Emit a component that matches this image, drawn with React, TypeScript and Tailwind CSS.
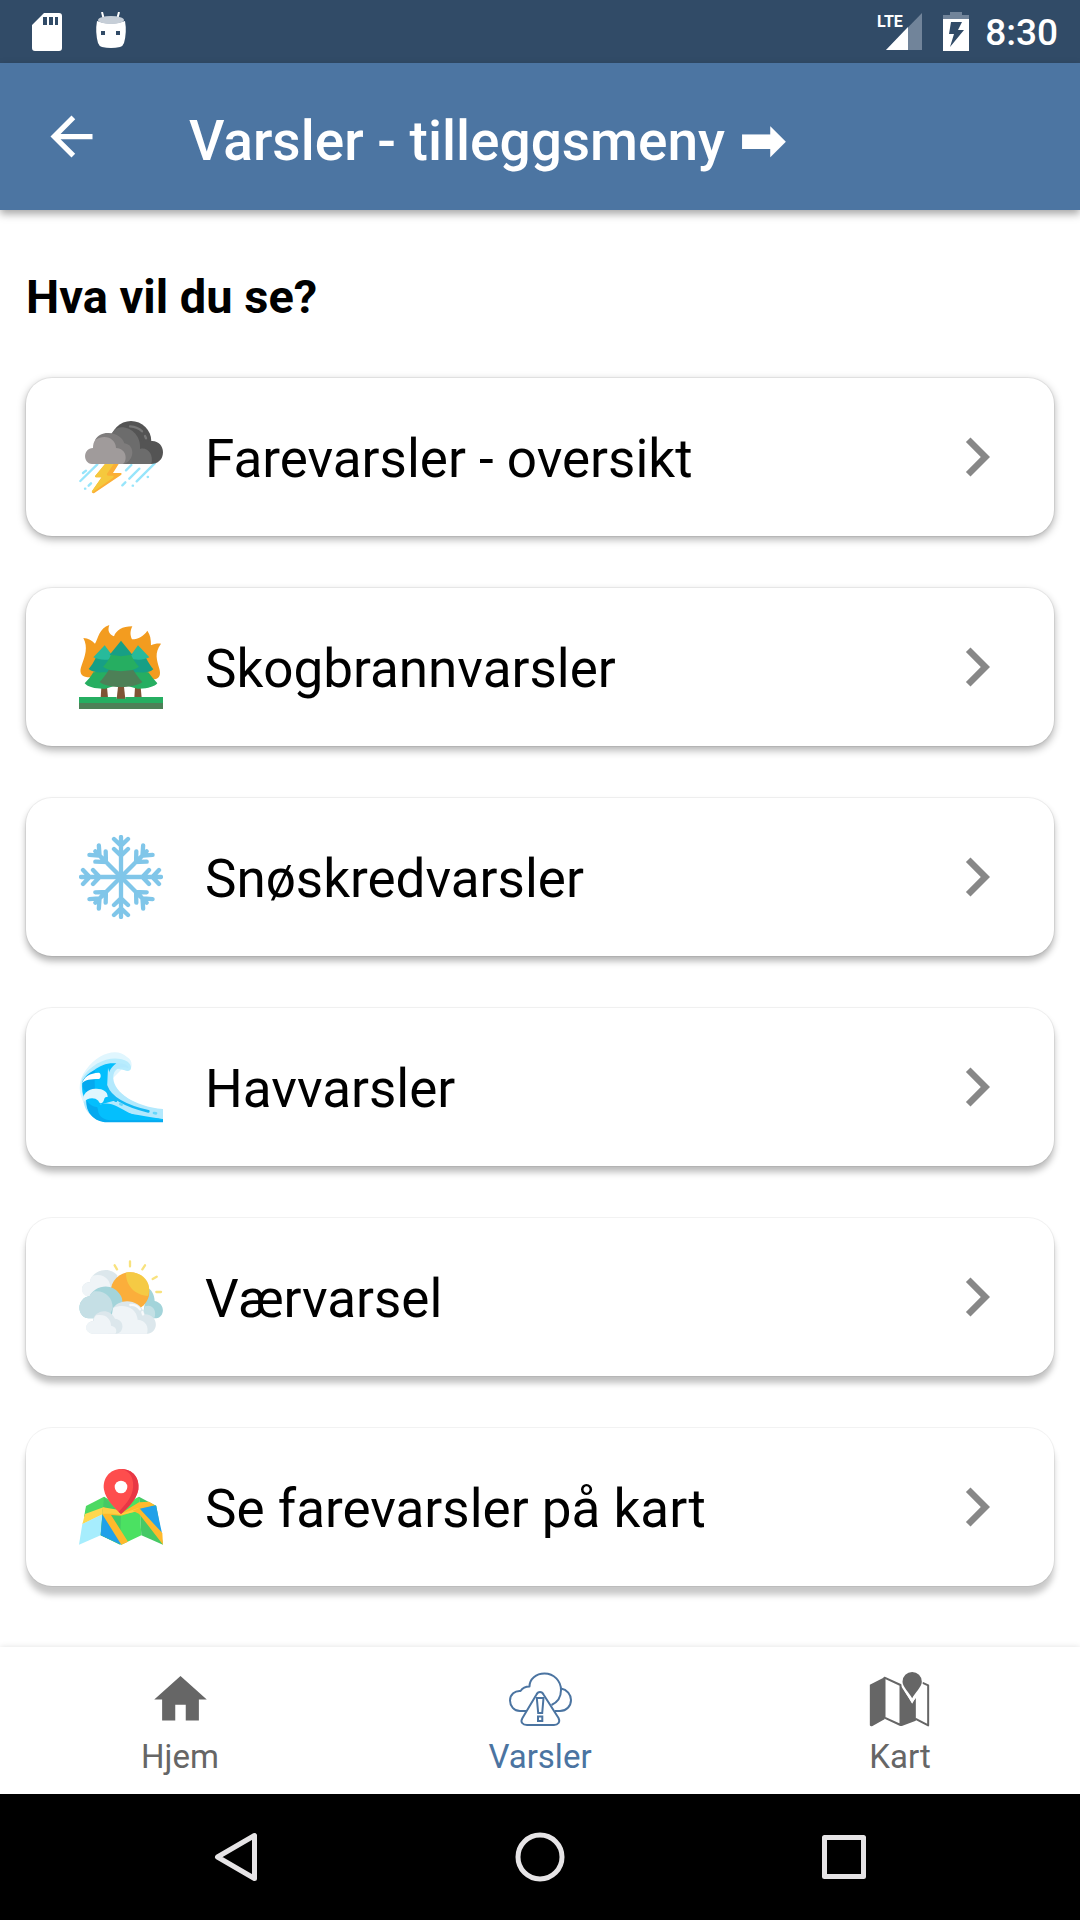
import type { ReactNode } from "react";

function StormIcon() {
  return (
    <svg viewBox="57 45 252 252" className="size-[84px] shrink-0" aria-hidden="true">
      <g stroke="#97e5fb" strokeWidth="7" strokeLinecap="round">
        <path d="M112 193 61 243M78 212l-9 7M93 250l-7 7M75 266h1M214 195l-16 16M238 206l-30 30M284 190l-54 54M196 247l-9 9M218 257h1M263 231h1" />
      </g>
      <circle cx="213" cy="124" r="61" fill="#545454" />
      <path d="M155 192v-70l120 1c20-1 34 15 34 34 0 22-16 35-36 35z" fill="#545454" />
      <path d="M155 192 154 101c8-12 18-19 30-19 34 0 60 31 56 65 22-7 42 16 34 45z" fill="#6c6c6c" />
      <path d="M190 192 105 121c8-16 25-23 41-22 24 1 42 14 47 31 33 4 32 52-2 62z" fill="#7e7c7c" />
      <path d="M96 192c-28-2-28-47 3-48 0-10 2-18 7-25 31-19 62-2 62 25 35 1 34 43 20 48z" fill="#a09b9b" />
      <path d="M210 79c15 1 28 6 36 15M255 108l3 7" stroke="#777" strokeWidth="7" strokeLinecap="round" fill="none" />
      <path d="M135 192h41l-17 27h24c3 2 2 4 0 6l-80 54c-5 2-9-2-7-5l29-42h-17c-3-1-4-3-2-5z" fill="#fbaf36" />
      <path d="M135 192h26l-20 29c-1 3 0 5 4 6h14c3 1 2 4 0 6l-60 43c-3 0-4-1-3-3l29-41h-17c-3-1-4-3-2-5z" fill="#f5c83d" />
    </svg>
  );
}

function ForestFireIcon() {
  return (
    <svg viewBox="57 45 252 252" className="size-[84px] shrink-0" aria-hidden="true">
      <path d="M82 202c-20-2-25-16-17-36 10-28 20-54 5-82 15 1 26 7 35 17 10-16 12-46 43-56-6 17-1 28 14 34 7-18 24-30 55-30-7 15-7 26-1 39 20 0 35-10 46-26 9 12 11 26 11 44 9-4 19-6 30-5-21 28-12 49-5 75 5 17 1 28-13 32z" fill="#f39c1f" />
      <path d="M124 232h17l3 31h-22zM225 232h17l3 31h-22z" fill="#7f5435" />
      <path d="m101 187 33-4 34 4 14 20 16-20 33-4 34 4c9 13 19 24 27 33-9 10-29 17-60 16l-50-14-46 14c-28 1-52-4-62-16 9-10 19-20 26-33z" fill="#26ae61" />
      <path d="m107 144 27-5 27 5 55 0 18-5 24 5c7 14 15 25 22 34-9 8-24 11-44 9H131c-20 2-36-3-45-10 8-9 15-20 21-33z" fill="#179f85" />
      <path d="m134 106 28 37c-16 9-43 8-62-1zM234 106l34 36c-17 9-45 9-61 1z" fill="#27ba9b" />
      <path d="M183 92l34 42c-14 10-54 10-68 0z" fill="#179f85" />
      <path d="m153 134 30 5 30-5c7 15 15 26 24 36-23 18-85 18-108 0 9-10 18-21 24-36z" fill="#26ae61" />
      <path d="m146 180 37 4 37-4c8 14 17 25 27 36-25 20-104 20-128 0 10-11 19-22 27-36z" fill="#4d8057" />
      <path d="M174 231h18l4 36h-26z" fill="#7f5435" />
      <path d="M57 261h113v5h26v-5h113v18H57z" fill="#26ae61" />
      <path d="M57 279h252v18H57z" fill="#4d8057" />
    </svg>
  );
}

function SnowIcon() {
  return (
    <svg viewBox="57 45 252 252" className="size-[84px] shrink-0" aria-hidden="true">
      <g stroke="#80c6e9" strokeWidth="13" strokeLinecap="round" fill="none">
        {[0, 45, 90, 135, 180, 225, 270, 315].map((angle) => (
          <path
            key={angle}
            transform={`rotate(${angle} 183 171)`}
            d={angle % 90 === 0 ? "M183 171V51M162 57l21 20 21-20M162 87l21 20 21-20" : "M183 171V80M163 57l20 23 20-23M161 84l22 23 22-23M183 90V62"}
          />
        ))}
      </g>
    </svg>
  );
}

function WaveIcon() {
  return (
    <svg viewBox="57 30 252 252" className="size-[84px] shrink-0" aria-hidden="true">
      <path d="M82 218c-30-36-30-82-4-114 36-50 94-67 123-38 20 9 16 40 3 42-7 1-12-3-15-9l-90 90z" fill="#e0f6fe" />
      <path d="M66 130c34-53 96-73 137-50 20 18 7 33-8 26l-44-9-62 94c-22-12-28-34-23-61z" fill="#b8ecfd" />
      <path d="M68 138c18-33 58-60 99-54 28 2 38 5 38 15-30-8-47 8-45 32 3 40 61 83 149 91v38H142c-43-4-72-31-72-71-5-15-5-33-2-51z" fill="#b3e9fd" />
      <path d="M68 138c6-12 18-24 34-32 18-16 43-24 67-21-18 13-25 28-24 48 4 44 40 78 96 100l68 20v8H142c-38-3-62-26-62-61-13-18-16-39-12-62z" fill="#04bffd" />
      <path d="M68 138c8-13 20-24 36-32-1 27 1 48 1 65l-20 2c-16-5-19-17-17-35zM79 196c-2 37 24 66 63 66h167v-10H165c-32-2-49-12-53-35-15-2-25-9-33-21z" fill="#05a9ef" />
      <path d="M119 209c22 14 78 26 190 43v-28c-65-4-112-30-145-67-9-11-13-23-13-37l-7-21-3 63 29 33z" fill="#b3e9fd" />
      <path d="M119 209c33-11 55 8 89 25 24 11 50 15 100 18v4H150c-29-4-44-24-31-47z" fill="#04bffd" />
      <path d="M139 154c13 36 67 61 126 75M139 176c9 10 18 16 29 21" stroke="#14b8f4" strokeWidth="8" strokeLinecap="round" fill="none" />
      <path d="m181 207 4 2M282 234l6 1" stroke="#65d7fb" strokeWidth="8" strokeLinecap="round" />
      <path d="M66 145c5-19 24-31 50-32 8 1 8 18 0 19-25 0-39 2-50 13z" fill="#fff" />
      <path d="M70 202c-6-25 16-42 37-41 20-1 37 8 36 25-5 0-9 0-11 8-3 12-12 15-17 3-12-12-33-9-45 5z" fill="#e0f6fe" />
    </svg>
  );
}

function WeatherIcon() {
  return (
    <svg viewBox="57 30 252 252" className="size-[84px] shrink-0" aria-hidden="true">
      <path d="M164 61l7 12M210 49v15M255 61l-8 12M290 95l-12 7M289 141h14" stroke="#f8e27e" strokeWidth="7" strokeLinecap="round" />
      <path d="M82 153c-23-9-21-40 8-42 2-28 51-54 82-20v50z" fill="#dce7ec" />
      <path d="M82 155c-24-9-21-42 8-43 0-9 3-15 8-20 36-9 56 14 54 45z" fill="#eff4f7" />
      <path d="M262 128c12 5 21 19 22 40 34 7 30 49 5 52h-42z" fill="#a3d4da" />
      <path d="M283 220c9-28-9-44-28-36l-10 36z" fill="#c3e0e5" />
      <circle cx="210" cy="140" r="58" fill="#fbae3b" />
      <path d="M198 83c47-8 81 30 66 70-39-3-67-31-66-70z" fill="#f5ca44" />
      <path d="M86 220c-36-2-39-60 3-67 13-29 68-46 94 0 3 6 4 11 4 17l-10 50z" fill="#a3d4da" />
      <path d="M86 220c-36-2-39-60 3-67 3-6 7-10 13-14 34-4 57 20 56 50l-12 31z" fill="#c5dfe5" />
      <path d="M163 266l-5-74c17-31 78-35 97 16 43 3 41 55 9 58z" fill="#dce7ec" />
      <path d="M143 266l17-78c34-14 70 0 73 36 25 2 34 21 28 42z" fill="#eff4f7" />
      <path d="M99 266c-26-2-27-34 0-38 0-28 47-46 66-7 31 3 28 44 3 45z" fill="#dce7ec" />
      <path d="M99 266c-28-2-28-35 2-38 0-7 3-13 8-17 27-6 44 10 44 31 15 2 20 16 13 24z" fill="#eff4f7" />
      <path d="M211 180c12-1 23 5 29 13M247 201l2 7" stroke="#f8fafb" strokeWidth="7" strokeLinecap="round" fill="none" />
    </svg>
  );
}

function MapPinIcon() {
  return (
    <svg viewBox="57 30 252 252" className="size-[84px] shrink-0" aria-hidden="true">
      <path d="m78 153 54-28v33l-60 28z" fill="#4dd963" />
      <path d="m75 177 57-21-6 23-59 29z" fill="#ffd74e" />
      <path d="m67 207 60-29-5 63-65 28z" fill="#a6edfd" />
      <path d="m132 125 50 28 55-28 7 116-60 28-62-28z" fill="#4be162" />
      <path d="m132 125 51 52-3 92-58-28z" fill="#45c965" />
      <path d="m127 178 57 73v18l-62-28z" fill="#20a1e9" />
      <path d="m129 157 54 18 54-33v24l-54 16-30-2 51 80-20 9-57-91z" fill="#ffb92c" />
      <path d="m129 157 44 7 10 12 54-18v10l-54 11-28-3h-28z" fill="#ffcf43" />
      <path d="m237 125 52 28 20 116-65-28z" fill="#45c965" />
      <path d="m237 159 51-8 18 84z" fill="#20a1e9" />
      <path d="m237 142 30-2 18 11-46 10 68 73 2 35-72-93z" fill="#ffb92c" />
      <path d="m218 167 19-8 7 8v13z" fill="#ffb92c" />
      <path d="M183 42c37 0 57 29 52 62-5 29-35 58-52 73-16-15-46-43-51-73-5-33 17-62 51-62z" fill="#fe4d4d" />
      <path d="M183 42c37 0 57 29 52 62-5 29-35 58-52 73l-7-7c17-17 37-39 42-64 7-34-9-61-35-64z" fill="#e83745" />
      <circle cx="183" cy="96" r="19" fill="#fff" />
    </svg>
  );
}

function HomeTabIcon() {
  return (
    <svg viewBox="0 0 24 24" className="size-[63px]" fill="currentColor" aria-hidden="true">
      <path d="M10 20v-6h4v6h5v-8h3L12 3 2 12h3v8z" />
    </svg>
  );
}

function AlertTabIcon() {
  return (
    <svg viewBox="0 0 63 63" className="size-[63px]" fill="none" stroke="currentColor" strokeWidth="2" strokeLinejoin="round" aria-hidden="true">
      <path d="M17 43h-6C5 43 1 38 1 32.500c0-6 5-10 10.500-9.500 2-3 5-4.500 9-4.500C20.500 11 27 5.500 35.500 5.500 45 5.500 52 13 52 22c0 7-4 12.500-9.500 15M52 20.500c6 1 10 6 10 11.500 0 6-4.500 11-11 11h-5" />
      <path d="M27.500 26.500c1.500-3.300 5.500-3.300 7 0L49.500 50c2 4-.5 7-4.500 7H18c-4.500 0-7-3-4.500-7z" />
      <path d="M27.800 30h6.700l-1.300 15h-4zM29 48.500h4.300V53H29z" strokeLinejoin="miter" />
    </svg>
  );
}

function MapTabIcon() {
  return (
    <svg viewBox="685.5 324 189 189" className="size-[63px]" fill="currentColor" aria-hidden="true">
      <path d="m732 353 48 22v120l-48-22zM824 476l39 20V376l-18-8" fill="none" stroke="currentColor" strokeWidth="6" strokeLinejoin="round" />
      <path d="M688 374v122q2 4 8 2l36-20V352zM779 374l35 54 12-14v68l-42 16h-5z" />
      <path d="M815 431c-11-23-32-46-32-66 0-41 64-41 64 0 0 20-20 43-32 66z" fill="#fff" />
      <path d="M815 415c-8-17-29-34-29-50a29 29 0 0 1 58 0c0 16-21 33-29 50z" />
    </svg>
  );
}

const items: { label: string; icon: ReactNode; shadow: string }[] = [
  { label: "Farevarsler - oversikt", icon: <StormIcon />, shadow: "shadow-[0_3px_8px_rgba(0,0,0,0.34)]" },
  { label: "Skogbrannvarsler", icon: <ForestFireIcon />, shadow: "shadow-[0_4px_8px_rgba(0,0,0,0.32)]" },
  { label: "Snøskredvarsler", icon: <SnowIcon />, shadow: "shadow-[0_5px_7px_rgba(0,0,0,0.3)]" },
  { label: "Havvarsler", icon: <WaveIcon />, shadow: "shadow-[0_6px_7px_rgba(0,0,0,0.28)]" },
  { label: "Værvarsel", icon: <WeatherIcon />, shadow: "shadow-[0_7px_6px_rgba(0,0,0,0.25)]" },
  { label: "Se farevarsler på kart", icon: <MapPinIcon />, shadow: "shadow-[0_9px_6px_rgba(0,0,0,0.22)]" },
];

const tabs = [
  { label: "Hjem", icon: <HomeTabIcon />, color: "text-[#666666]", active: false },
  { label: "Varsler", icon: <AlertTabIcon />, color: "text-[#4b74a1]", active: true },
  { label: "Kart", icon: <MapTabIcon />, color: "text-[#666666]", active: false },
];

function StatusBar() {
  return (
    <div className="flex h-[63px] items-center justify-between bg-[#314b67] pr-[22px] pl-8 text-white">
      <div className="flex items-center gap-8">
        <svg viewBox="0 0 31 40" className="h-10 w-[31px]" aria-hidden="true">
          <path fillRule="evenodd" fill="#fff" d="M12 1h15q3 0 3 3v32q0 3-3 3H3q-3 0-3-3V13zM11 5v8h4V5zM17 5v8h4V5zM23 5v8h3V5z" />
        </svg>
        <svg viewBox="0 0 32 40" className="h-10 w-8" aria-hidden="true">
          <path d="M7 0l2 8M24 0l-2 8" stroke="#fff" strokeWidth="2" />
          <path fill="#fff" fillRule="evenodd" d="M2 9q14 5 28 0 2 11-1 22-1 3-4 4-9 2-18 0-3-1-4-4-3-11-1-22zM6 19h4v4H6zM21 19h4v4h-4z" />
          <ellipse cx="16" cy="8" rx="13" ry="4" fill="#c6ced7" />
        </svg>
      </div>
      <div className="flex items-center">
        <svg viewBox="0 0 46 40" className="h-10 w-[46px]" aria-label="LTE" role="img">
          <path d="M45 1v37H9z" fill="#71849a" />
          <path d="M31 15v23H9z" fill="#fff" />
          <text x="0" y="15" fill="#fff" fontFamily="Roboto, sans-serif" fontWeight="700" fontSize="16">LTE</text>
        </svg>
        <svg viewBox="0 0 26 40" className="ml-5 h-10 w-[26px]" aria-hidden="true">
          <path d="M0 8V3h7V0h12v3h7v5z" fill="#71849a" />
          <path fillRule="evenodd" fill="#fff" d="M0 7h26v32H0zM8 10 6 22h5L7 35l14-17h-6l4-8z" />
        </svg>
        <time className="ml-4 pt-px text-[37px] leading-none font-medium">8:30</time>
      </div>
    </div>
  );
}

export default function App() {
  return (
    <div className="flex min-h-screen flex-col bg-white font-[Roboto,sans-serif] text-black">
      <StatusBar />
      <header className="relative flex h-[147px] shrink-0 items-center bg-[#4c75a2] text-white shadow-[0_4px_8px_rgba(0,0,0,0.35)]">
        <button type="button" aria-label="Tilbake" className="ml-10 flex size-[63px] items-center justify-center">
          <svg viewBox="0 0 24 24" className="size-[63px]" fill="currentColor" aria-hidden="true">
            <path d="M20 11H7.830l5.590-5.590L12 4l-8 8 8 8 1.410-1.410L7.830 13H20z" />
          </svg>
        </button>
        <h1 className="ml-[86px] pt-1.5 text-[55px] leading-none font-medium">
          Varsler - tilleggsmeny <span className="font-['DejaVu_Sans',sans-serif] text-[58px] leading-none font-bold">➡&#xFE0E;</span>
        </h1>
      </header>

      <main className="flex-1 px-[26px] pt-[58px] pb-[61px]">
        <h2 className="text-[47px] leading-[58px] font-bold">Hva vil du se?</h2>
        <ul className="mt-[52px] flex flex-col gap-[52px]">
          {items.map((item) => (
            <li key={item.label}>
              <button
                type="button"
                className={`flex h-[158px] w-full items-center rounded-[26px] bg-white pr-[38px] pl-[53px] text-left ring-1 ring-black/5 ${item.shadow}`}
              >
                {item.icon}
                <span className="ml-[42px] flex-1 pt-1 text-[53px] leading-none">{item.label}</span>
                <svg viewBox="0 0 24 24" className="size-[78px] shrink-0" fill="#878787" aria-hidden="true">
                  <path d="M10 6 8.590 7.410 13.170 12l-4.580 4.590L10 18l6-6z" />
                </svg>
              </button>
            </li>
          ))}
        </ul>
      </main>

      <nav aria-label="Hovedmeny" className="grid h-[147px] shrink-0 grid-cols-3 bg-white shadow-[0_0_6px_rgba(0,0,0,0.12)]">
        {tabs.map((tab) => (
          <button
            key={tab.label}
            type="button"
            aria-current={tab.active ? "page" : undefined}
            className={`flex flex-col items-center pt-[21px] ${tab.color}`}
          >
            {tab.icon}
            <span className="mt-1.5 text-[33px] leading-10">{tab.label}</span>
          </button>
        ))}
      </nav>

      <div className="grid h-[126px] shrink-0 grid-cols-3 bg-black px-[84px] text-[#e6e4e6]">
        <button type="button" aria-label="Tilbake (system)" className="flex items-center justify-center">
          <svg viewBox="0 0 50 50" className="size-[50px]" fill="none" stroke="currentColor" strokeWidth="5" strokeLinejoin="round" aria-hidden="true">
            <path d="M43.500 3.500v43L6.500 25z" />
          </svg>
        </button>
        <button type="button" aria-label="Hjemskjerm" className="flex items-center justify-center">
          <svg viewBox="0 0 50 50" className="size-[50px]" fill="none" stroke="currentColor" strokeWidth="5" aria-hidden="true">
            <circle cx="25" cy="25" r="22" />
          </svg>
        </button>
        <button type="button" aria-label="Nylige apper" className="flex items-center justify-center">
          <svg viewBox="0 0 50 50" className="size-[50px]" fill="none" stroke="currentColor" strokeWidth="5" strokeLinejoin="round" aria-hidden="true">
            <path d="M5.500 5.500h39v39h-39z" />
          </svg>
        </button>
      </div>
    </div>
  );
}
